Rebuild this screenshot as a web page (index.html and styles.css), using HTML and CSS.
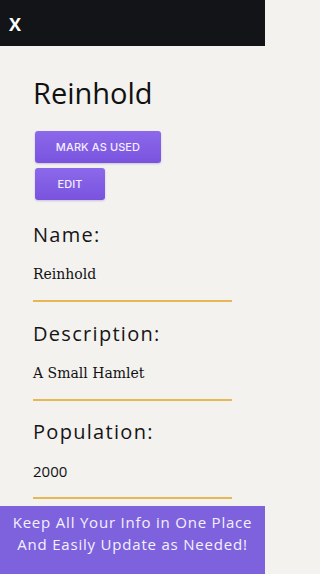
FILE: index.html
```html
<!DOCTYPE html>
<html>
<head>
<meta charset="utf-8">
<link rel="stylesheet" href="styles.css">
</head>
<body>
<div class="app">
  <header class="topbar"><span class="close">X</span></header>
  <main class="content">
    <h1 class="title">Reinhold</h1>
    <div class="actions">
      <button class="btn btn-wide">MARK AS USED</button>
      <button class="btn btn-small">EDIT</button>
    </div>
    <section class="field first">
      <div class="label">Name:</div>
      <div class="value serif">Reinhold</div>
      <div class="rule"></div>
    </section>
    <section class="field">
      <div class="label">Description:</div>
      <div class="value serif">A Small Hamlet</div>
      <div class="rule"></div>
    </section>
    <section class="field">
      <div class="label">Population:</div>
      <div class="value sans">2000</div>
      <div class="rule"></div>
    </section>
  </main>
  <footer class="banner">
    <div>Keep All Your Info in One Place</div>
    <div>And Easily Update as Needed!</div>
  </footer>
</div>
</body>
</html>
```

FILE: styles.css
```css
* { box-sizing: border-box; }
html, body { margin: 0; padding: 0; }
body {
  width: 265px;
  height: 574px;
  background: #f3f2ef;
  font-family: "Open Sans", "Noto Sans", sans-serif;
  color: #111;
  overflow: hidden;
}
.app {
  display: flex;
  flex-direction: column;
  width: 265px;
  height: 574px;
}
.topbar {
  height: 46px;
  flex: 0 0 46px;
  background: #121417;
  display: flex;
  align-items: center;
  padding-left: 9px;
}
.close {
  color: #fff;
  font-weight: 700;
  font-size: 18px;
  line-height: 1;
  margin-top: 2px;
}
.content {
  flex: 1;
  overflow: hidden;
  padding: 27px 33px 0 33px;
}
.title {
  margin: 0;
  font-weight: 400;
  font-size: 29px;
  line-height: 40px;
  color: #111;
}
.actions {
  display: flex;
  flex-direction: column;
  align-items: flex-start;
  gap: 5px;
  margin-top: 18px;
  padding-left: 2px;
}
.btn {
  height: 32px;
  padding: 0;
  border: none;
  border-radius: 3px;
  background: linear-gradient(#8c69eb, #7953de);
  color: #f2eeff;
  font-family: "Inter", "Open Sans", sans-serif;
  font-weight: 500;
  font-size: 11px;
  letter-spacing: 0.1px;
  white-space: nowrap;
  text-align: center;
  box-shadow: 0 1px 2px rgba(80, 50, 160, 0.25);
}
.btn-wide { width: 126px; }
.btn-small { width: 70px; }
.field { margin-top: 17.5px; }
.field.first { margin-top: 21px; }
.label {
  height: 28px;
  font-size: 20px;
  line-height: 28px;
  letter-spacing: 1.3px;
  color: #151515;
}
.value {
  height: 20px;
  margin-top: 15px;
  line-height: 20px;
  color: #111;
}
.serif {
  font-family: "DejaVu Serif", "Liberation Serif", serif;
  font-size: 14px;
}
.sans {
  font-family: "Open Sans", sans-serif;
  font-size: 15px;
}
.rule {
  margin-top: 16px;
  width: 199px;
  height: 2px;
  background: #e7b756;
}
.banner {
  flex: 0 0 68px;
  height: 68px;
  background: #7e62dd;
  color: #f4f1ff;
  font-size: 15px;
  line-height: 21.5px;
  letter-spacing: 0.8px;
  text-align: center;
  padding-top: 6px;
}
```
